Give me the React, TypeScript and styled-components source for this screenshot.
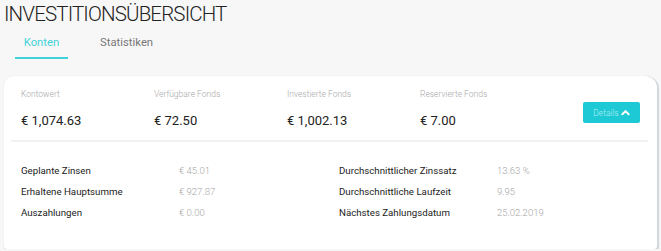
import styled, { createGlobalStyle } from "styled-components";

const GlobalStyle = createGlobalStyle`
  body {
    margin: 0;
    background: #f7f7f7;
    font-family: Roboto, "Liberation Sans", sans-serif;
  }
`;

const summary = [
  { label: "Kontowert", value: "€ 1,074.63" },
  { label: "Verfügbare Fonds", value: "€ 72.50" },
  { label: "Investierte Fonds", value: "€ 1,002.13" },
  { label: "Reservierte Fonds", value: "€ 7.00" },
];

const detailsLeft = [
  { label: "Geplante Zinsen", value: "€ 45.01" },
  { label: "Erhaltene Hauptsumme", value: "€ 927.87" },
  { label: "Auszahlungen", value: "€ 0.00" },
];

const detailsRight = [
  { label: "Durchschnittlicher Zinssatz", value: "13.63 %" },
  { label: "Durchschnittliche Laufzeit", value: "9.95" },
  { label: "Nächstes Zahlungsdatum", value: "25.02.2019" },
];

export default function App() {
  return (
    <Page>
      <GlobalStyle />
      <Title>INVESTITIONSÜBERSICHT</Title>
      <Tabs>
        <Tab $active>Konten</Tab>
        <Tab>Statistiken</Tab>
      </Tabs>
      <Card>
        <Summary>
          {summary.map((s) => (
            <Stat key={s.label}>
              <StatLabel>{s.label}</StatLabel>
              <StatValue>{s.value}</StatValue>
            </Stat>
          ))}
          <DetailsButton>
            Details
            <svg width="9" height="7" viewBox="0 0 10 7">
              <path
                d="M1.5 5.5 L5 2 L8.5 5.5"
                fill="none"
                stroke="#fff"
                strokeWidth="2.2"
                strokeLinecap="round"
                strokeLinejoin="round"
              />
            </svg>
          </DetailsButton>
        </Summary>
        <Divider />
        <Details>
          <DetailGrid>
            {detailsLeft.map((d) => (
              <Row key={d.label}>
                <RowLabel>{d.label}</RowLabel>
                <RowValue>{d.value}</RowValue>
              </Row>
            ))}
          </DetailGrid>
          <DetailGrid>
            {detailsRight.map((d) => (
              <Row key={d.label}>
                <RowLabel>{d.label}</RowLabel>
                <RowValue>{d.value}</RowValue>
              </Row>
            ))}
          </DetailGrid>
        </Details>
      </Card>
    </Page>
  );
}

const Page = styled.div`
  padding: 3px 4px 0 4px;
  width: 653px;
`;
const Title = styled.h1`
  margin: 0;
  font-size: 20.5px;
  font-weight: 300;
  color: #222;
  line-height: 22px;
  letter-spacing: -0.85px;
`;
const Tabs = styled.div`
  display: flex;
  margin: 11px 0 0 11px;
`;
const Tab = styled.div<{ $active?: boolean }>`
  width: 53px;
  margin-right: 32px;
  text-align: center;
  font-size: 11.3px;
  line-height: 14px;
  padding-bottom: 7px;
  color: ${({ $active }) => ($active ? "#45d3da" : "#777")};
  border-bottom: 2px solid ${({ $active }) => ($active ? "#3fd4dc" : "transparent")};
  white-space: nowrap;
`;
const Card = styled.div`
  margin-top: 17px;
  background: #fff;
  border-radius: 10px 12px 3px 3px;
  box-shadow: 1px 1px 1px 1px #cfd6dc;
  padding-bottom: 29px;
`;
const Summary = styled.div`
  display: flex;
  align-items: flex-end;
  padding: 12px 17px 10px 17px;
`;
const Stat = styled.div`
  width: 133px;
  display: flex;
  flex-direction: column;
`;
const StatLabel = styled.span`
  font-size: 8.5px;
  font-weight: 300;
  color: #a8a8a8;
  line-height: 12px;
`;
const StatValue = styled.span`
  margin-top: 12px;
  font-size: 13px;
  color: #222;
  line-height: 18px;
`;
const DetailsButton = styled.button`
  margin-left: auto;
  margin-bottom: 7px;
  width: 57px;
  height: 21px;
  border: 0;
  border-radius: 2px;
  background: #1cc9d4;
  color: #b8eef1;
  font-family: Roboto, "Liberation Sans", sans-serif;
  font-size: 8.5px;
  font-weight: 300;
  display: flex;
  align-items: center;
  justify-content: center;
  gap: 2px;
  padding: 0;
`;
const Divider = styled.div`
  height: 2px;
  background: #f2f2f2;
  margin: 0 9px 0 7px;
`;
const Details = styled.div`
  display: grid;
  grid-template-columns: 318px 1fr;
  padding: 22px 17px 0 17px;
`;
const DetailGrid = styled.div`
  display: flex;
  flex-direction: column;
  gap: 7px;
`;
const Row = styled.div`
  display: grid;
  grid-template-columns: 158px 1fr;
  line-height: 14px;
`;
const RowLabel = styled.span`
  font-size: 9.7px;
  color: #222;
`;
const RowValue = styled.span`
  font-size: 9.5px;
  font-weight: 300;
  color: #a5a5a5;
`;
